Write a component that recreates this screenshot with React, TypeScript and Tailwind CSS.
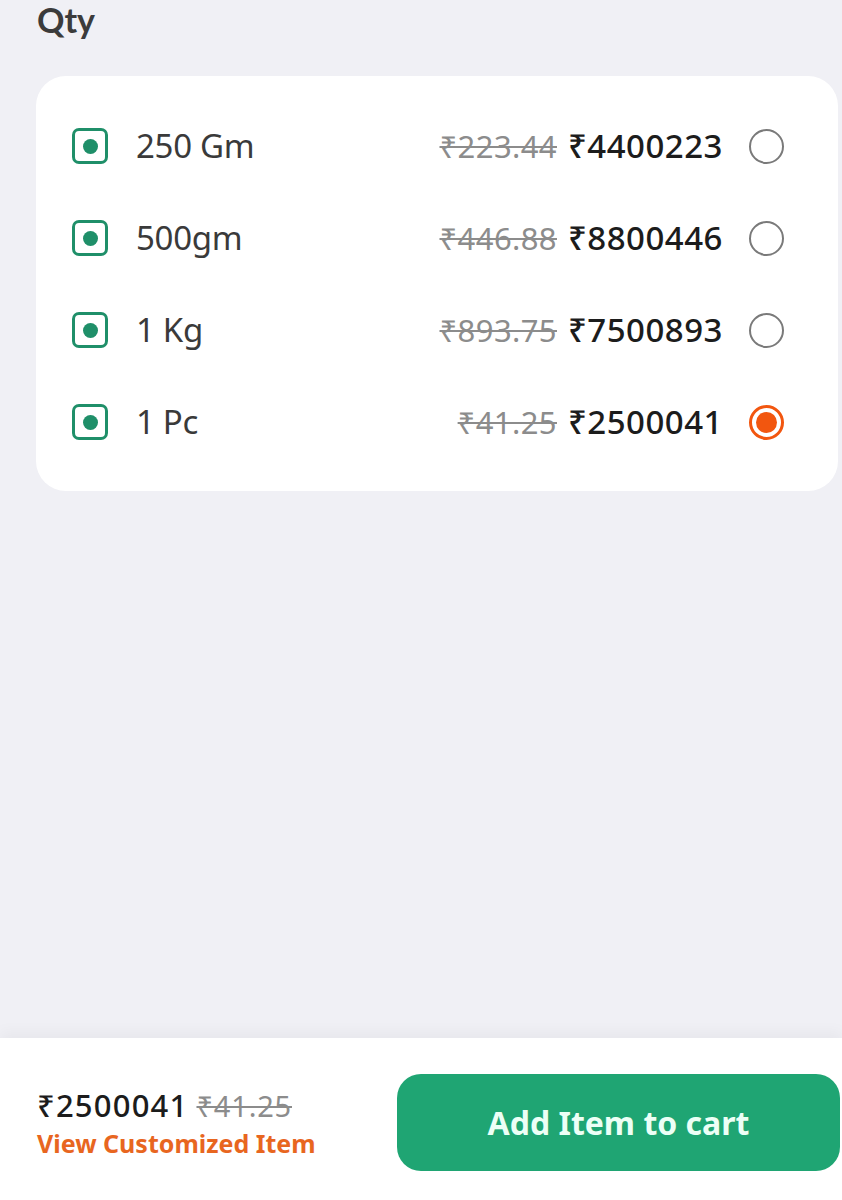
import React from 'react';

interface Variant {
  label: string;
  mrp: string;
  price: string;
  selected?: boolean;
}

const variants: Variant[] = [
  { label: '250 Gm', mrp: '₹223.44', price: '₹4400223' },
  { label: '500gm', mrp: '₹446.88', price: '₹8800446' },
  { label: '1 Kg', mrp: '₹893.75', price: '₹7500893' },
  { label: '1 Pc', mrp: '₹41.25', price: '₹2500041', selected: true },
];

function VegMark() {
  return (
    <div className="flex h-[36px] w-[36px] shrink-0 items-center justify-center rounded-[7px] border-[3px] border-[#1f8f69]">
      <div className="h-[15px] w-[15px] rounded-full bg-[#1f8f69]" />
    </div>
  );
}

function Radio({ selected }: { selected?: boolean }) {
  if (selected) {
    return (
      <div className="flex h-[35px] w-[35px] shrink-0 items-center justify-center rounded-full border-[3px] border-[#f2560f]">
        <div className="h-[21px] w-[21px] rounded-full bg-[#f2560f]" />
      </div>
    );
  }
  return <div className="h-[35px] w-[35px] shrink-0 rounded-full border-[2.5px] border-[#7a7a7a]" />;
}

export default function App() {
  return (
    <div
      className="flex h-[1200px] w-[842px] flex-col overflow-hidden bg-[#f0f0f5]"
      style={{ fontFamily: '"Noto Sans", sans-serif' }}
    >
      {/* Heading */}
      <h2
        className="ml-[37px] text-[34px] font-bold leading-[40px] text-[#3b3b3b]"
        style={{ fontFamily: 'Lato, "Noto Sans", sans-serif' }}
      >
        Qty
      </h2>

      {/* Variant card */}
      <div className="ml-[36px] mr-[4px] mt-[36px] flex flex-col gap-[26px] rounded-[30px] bg-white pb-[36px] pl-[36px] pr-[54px] pt-[37px]">
        {variants.map((v) => (
          <div key={v.label} className="flex h-[66px] items-center">
            <VegMark />
            <span className="ml-[28px] text-[33px] tracking-[-0.3px] text-[#3a3a3a]">{v.label}</span>
            <div className="ml-auto flex items-center gap-[11px]">
              <span className="text-[31px] tracking-[0.4px] text-[#8c8c8c] line-through decoration-[2px]">{v.mrp}</span>
              <span className="text-[33px] font-medium tracking-[0.5px] text-[#1c1c1c]">{v.price}</span>
            </div>
            <div className="ml-[26px]">
              <Radio selected={v.selected} />
            </div>
          </div>
        ))}
      </div>

      <div className="flex-1" />

      {/* Bottom bar */}
      <div className="flex h-[162px] items-center bg-white pl-[37px] pr-[2px] pt-[7px] shadow-[0_-6px_14px_rgba(0,0,0,0.04)]">
        <div className="flex flex-col">
          <div className="flex items-baseline gap-[8px] leading-[40px]">
            <span className="text-[31px] font-medium tracking-[1.2px] text-[#1c1c1c]">₹2500041</span>
            <span className="text-[29px] tracking-[0.8px] text-[#8c8c8c] line-through decoration-[2px]">₹41.25</span>
          </div>
          <span className="text-[25px] font-bold leading-[34px] text-[#e8661f]">View Customized Item</span>
        </div>
        <button className="ml-auto flex h-[97px] w-[443px] items-center justify-center rounded-[24px] bg-[#1fa573] text-[32px] font-bold text-[#ecfff6]">
          Add Item to cart
        </button>
      </div>
    </div>
  );
}
